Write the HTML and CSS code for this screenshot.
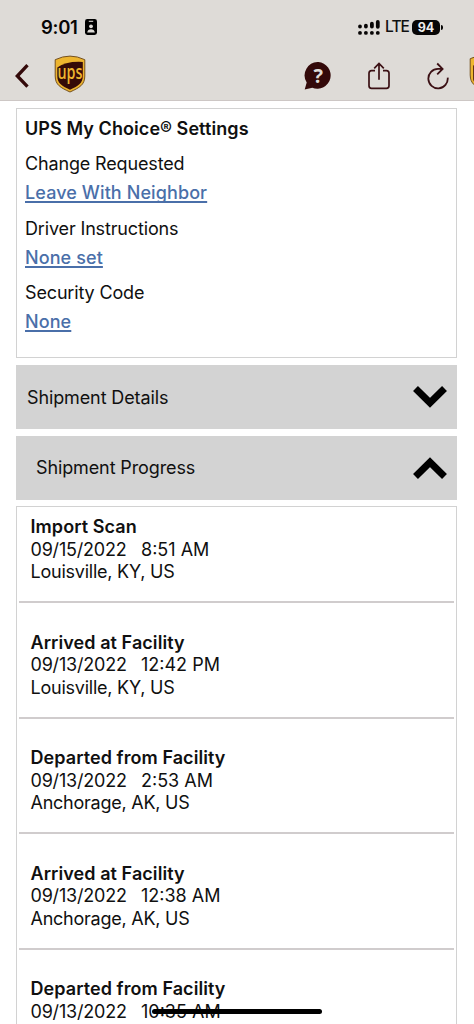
FILE: index.html
```html
<!DOCTYPE html>
<html lang="en">
<head>
<meta charset="utf-8">
<title>UPS Tracking</title>
<link rel="stylesheet" href="styles.css">
</head>
<body>
<div class="screen">
  <header class="top">
    <div class="status">
      <span class="time">9:01</span>
      <svg class="badge" viewBox="0 0 12 16" width="12" height="16"><rect width="12" height="16" rx="2.4"/><path d="M3.8 2.3h4.4" stroke="#dedbd7" stroke-width="1.1"/><circle cx="6" cy="7.3" r="1.9" fill="#dedbd7"/><path d="M2.2 13.6c.2-2.2 1.700-3.400 3.800-3.400s3.600 1.200 3.800 3.400z" fill="#dedbd7"/></svg>
      <svg class="signal" viewBox="0 0 22 15" width="22" height="15"><g stroke="#080606" stroke-width="3.800" stroke-linecap="round"><path d="M2 6.400v.1M7.900 5.700v.8M13.900 3.700v2.800M19.800 2v4.800"/><path d="M2 12.800v.1M7.900 12.800v.1M13.900 12.800v.1M19.800 12.800v.1"/></g></svg>
      <span class="lte">LTE</span>
      <span class="battery">94</span><i class="battery-tip"></i>
    </div>
    <nav class="nav">
      <svg class="back" viewBox="0 0 14 24" width="14" height="24"><path d="M12.500 1.200 2.300 12l10.200 10.600" fill="none" stroke="#330909" stroke-width="3.300"/></svg>
      <svg class="logo" viewBox="0 0 32 38" width="32" height="38"><use href="#shield"/><text x="16" y="24" text-anchor="middle" textLength="25" lengthAdjust="spacingAndGlyphs" class="logo-text">ups</text></svg>
      <svg class="help" viewBox="0 0 28 28" width="28" height="28"><path d="M14.400 0A13.400 13.400 0 1 1 8.300 25.800L.7 27.600 2.700 20.500A13.400 13.400 0 0 1 14.400 0z" fill="#330909"/><text x="14.300" y="21" text-anchor="middle" class="help-text">?</text></svg>
      <svg class="share" viewBox="0 0 22 28" width="22" height="28"><path d="M7 8.700H3.500Q1 8.700 1 11.200v12.600q0 2.500 2.500 2.500h15q2.500 0 2.500-2.500V11.200q0-2.500-2.500-2.500H15M11 17.800V1.700M6.200 6.300 11 1.500l4.800 4.800" fill="none" stroke="#3b1014" stroke-width="1.700"/></svg>
      <svg class="reload" viewBox="0 0 22 28" width="22" height="28"><path d="M20.700 15.600A9.700 9.700 0 1 1 11 6.900h4M10.200 1.500l5.400 5.400-5.400 5.400" fill="none" stroke="#3b1014" stroke-width="1.800"/></svg>
      <svg class="edge" viewBox="0 0 5 38" width="5" height="38"><use href="#shield"/><path d="M3.500 12v14" stroke="#edb52f" stroke-width="1.500"/></svg>
    </nav>
  </header>

  <main class="content">
    <section class="card settings">
      <h1 class="heading">UPS My Choice® Settings</h1>
      <p class="label">Change Requested</p><a class="link">Leave With Neighbor</a>
      <p class="label">Driver Instructions</p><a class="link">None set</a>
      <p class="label">Security Code</p><a class="link">None</a>
    </section>
    <section class="bar details"><span>Shipment Details</span>
      <svg viewBox="0 0 34 22" width="34" height="22"><path d="M2.500 2.600 17 16.800l14.500-14.200" fill="none" stroke="#000" stroke-width="7"/></svg>
    </section>
    <section class="bar progress"><span>Shipment Progress</span>
      <svg viewBox="0 0 34 22" width="34" height="22"><path d="M2.500 19.400 17 5.200l14.500 14.200" fill="none" stroke="#000" stroke-width="7"/></svg>
    </section>
    <section class="card events">
      <article class="event"><h2>Import Scan</h2><p><span class="date">09/15/2022</span><span>8:51 AM</span></p><p class="place">Louisville, KY, US</p></article>
      <article class="event"><h2>Arrived at Facility</h2><p><span class="date">09/13/2022</span><span>12:42 PM</span></p><p class="place">Louisville, KY, US</p></article>
      <article class="event"><h2>Departed from Facility</h2><p><span class="date">09/13/2022</span><span>2:53 AM</span></p><p class="place">Anchorage, AK, US</p></article>
      <article class="event"><h2>Arrived at Facility</h2><p><span class="date">09/13/2022</span><span>12:38 AM</span></p><p class="place">Anchorage, AK, US</p></article>
      <article class="event"><h2>Departed from Facility</h2><p><span class="date">09/13/2022</span><span>10:35 AM</span></p></article>
    </section>
  </main>
  <div class="home"></div>
</div>
<svg width="0" height="0" class="defs"><defs><g id="shield"><path d="M1.200 4.700Q16-2.500 30.800 4.700V21c0 9-5.500 11.700-14.800 16C6.700 32.700 1.200 30 1.200 21z" fill="#edb52f" stroke="#74501f" stroke-width="1"/><path d="M3.300 12.500Q12 6 28.800 6.900V21c0 7.200-4.200 9.700-12.800 13.700C7.400 30.700 3.300 28.200 3.300 21z" fill="#350b08"/></g></defs></svg>
</body>
</html>
```
FILE: styles.css
```css
* { box-sizing: border-box; }
body { margin: 0; background: #fff; color: #101010; font: 18px/22.5px Inter, "Liberation Sans", sans-serif; }
h1, h2, p { margin: 0; font-size: inherit; }
.screen { position: relative; height: 1024px; overflow: hidden; }
.top { height: 101px; background: #dedbd7; border-bottom: 1px solid #cdc7c5; }
.status { display: flex; align-items: center; height: 54px; padding: 0 31px 0 41px; }
.time { width: 44px; font-size: 18.500px; font-weight: 600; letter-spacing: -0.3px; color: #080606; }
.signal { margin-left: auto; }
.lte { width: 27px; margin-left: 5px; font-size: 15.500px; font-weight: 500; letter-spacing: -0.9px; }
.battery { width: 28px; height: 15px; border-radius: 5px; background: #080606; color: #eee; font-size: 12.500px; line-height: 15px; font-weight: 700; text-align: center; }
.battery-tip { width: 2px; height: 5px; margin-left: 1px; border-radius: 0 2px 2px 0; background: #080606; }
.nav { display: flex; align-items: center; height: 44px; padding-left: 15px; }
.logo { margin-left: 25px; margin-top: -4px; overflow: visible; }
.logo-text { font: 600 20px "Open Sans", sans-serif; fill: #edb52f; }
.help { margin-left: 218px; }
.help-text { font: 700 20px "Open Sans", sans-serif; fill: #dedbd7; }
.share { margin-left: 36px; }
.reload { margin-left: 37px; }
.edge { margin-left: 20px; margin-top: -7px; }
.content { display: grid; gap: 7px; padding: 7px 17px 0 16px; }
.card { border: 1px solid #d2d2d2; background: #fff; }
.settings { display: flex; flex-direction: column; align-items: flex-start; height: 250px; padding: 9px 8px; }
.heading { font-weight: 600; letter-spacing: 0.08px; }
.label { margin-top: 13.500px; letter-spacing: -0.15px; }
.heading + .label { margin-top: 12px; }
.link { margin-top: 6.500px; color: #4a6fa9; font-weight: 500; letter-spacing: 0.1px; text-decoration: underline; text-decoration-thickness: 1.500px; text-underline-offset: 2px; text-decoration-skip-ink: none; }
.link + .label ~ .label { margin-top: 12.500px; }
.bar { display: flex; align-items: center; justify-content: space-between; height: 64px; background: #d3d3d3; padding: 0 10px 0 11px; letter-spacing: -0.12px; }
.details span { padding-top: 2px; }
.progress { padding-left: 20px; }
.events { height: 540px; margin-top: -1px; padding: 0 2px; }
.event { padding: 28.500px 11.500px 17.500px; border-bottom: 2px solid #d0cccd; }
.event:first-child { padding-top: 9px; }
.event h2 { font-weight: 600; letter-spacing: 0.07px; }
.date { display: inline-block; width: 110.500px; letter-spacing: -0.2px; }
.place { letter-spacing: -0.24px; }
.home { position: absolute; left: 152px; top: 1009px; width: 170px; height: 5px; border-radius: 3px; background: #000; }
.defs { position: absolute; }
```
